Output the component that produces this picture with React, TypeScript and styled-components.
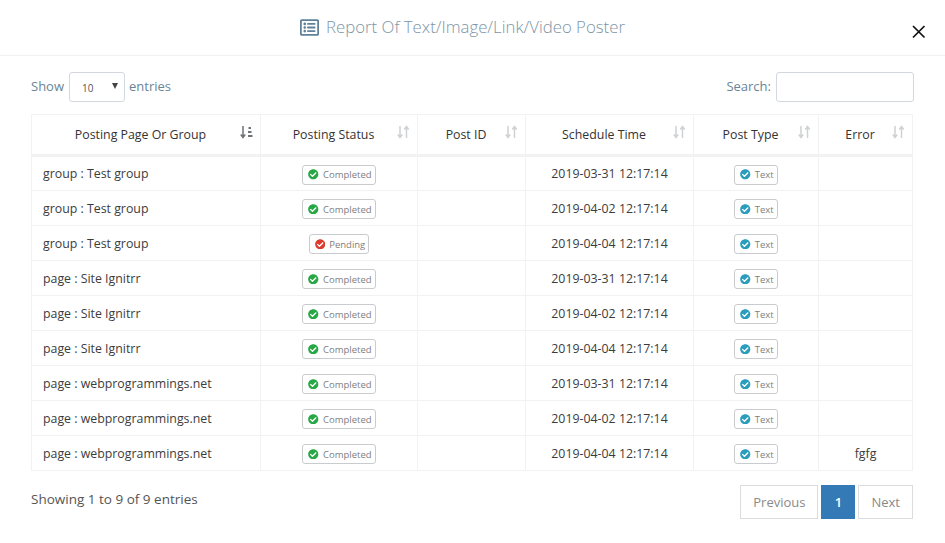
import * as React from "react";
import styled, { createGlobalStyle } from "styled-components";
import { FaCheckCircle, FaRegListAlt } from "react-icons/fa";

const GlobalStyle = createGlobalStyle`
  html, body {
    margin: 0;
    padding: 0;
    background: #fff;
    font-family: "Open Sans", "Liberation Sans", sans-serif;
  }
  * {
    box-sizing: border-box;
  }
`;

const Modal = styled.div`
  width: 945px;
  height: 543px;
  overflow: hidden;
  background: #fff;
`;

const Header = styled.div`
  position: relative;
  height: 56px;
  border-bottom: 1px solid #f1f1f1;
  display: flex;
  align-items: center;
  justify-content: center;
  gap: 7px;
  color: #7d95a5;
  padding-right: 20px;
  padding-bottom: 1px;
`;

const TitleIcon = styled(FaRegListAlt)`
  font-size: 19px;
  color: #5f8299;
`;

const Title = styled.div`
  font-size: 16.8px;
  font-weight: 300;
  line-height: 24px;
`;

const CloseButton = styled.button`
  position: absolute;
  right: 19px;
  top: 25px;
  width: 14px;
  height: 14px;
  padding: 0;
  border: 0;
  background: none;
  display: block;
`;

const Body = styled.div`
  padding: 16px 31px 0 31px;
`;

const Toolbar = styled.div`
  display: flex;
  justify-content: space-between;
  align-items: center;
  height: 30px;
  margin-bottom: 12px;
`;

const ToolGroup = styled.div`
  display: flex;
  align-items: center;
  gap: 4px;
  font-size: 13px;
  color: #698597;
`;

const ToolLabel = styled.span`
  margin-top: -2px;
`;

const SelectBox = styled.div`
  position: relative;
  width: 56px;
  height: 30px;
  margin-left: 1px;
  border: 1px solid #d3d7df;
  border-radius: 3px;
  font-size: 10px;
  color: #555;
  padding: 8px 0 0 12px;
  line-height: 15px;
  background: #fff;
`;

const SelectArrow = styled.span`
  position: absolute;
  right: 6px;
  top: 10px;
  width: 0;
  height: 0;
  border-left: 3.5px solid transparent;
  border-right: 3.5px solid transparent;
  border-top: 6px solid #444;
`;

const SearchInput = styled.input`
  width: 138px;
  height: 30px;
  margin-left: 1px;
  border: 1px solid #d3d7df;
  border-radius: 3px;
  background: #fff;
  outline: none;
`;

const Table = styled.table`
  width: 881px;
  table-layout: fixed;
  border-collapse: collapse;
  font-size: 12.35px;
  color: #333;
`;

const HeadCell = styled.th`
  position: relative;
  height: 41px;
  border: 1px solid #f2f2f2;
  border-bottom: 3px solid #f2f2f2;
  font-weight: 400;
  text-align: center;
  padding: 0 23px 0 12px;
  line-height: 18px;
`;

const SortIcon = styled.svg<{ $active?: boolean }>`
  position: absolute;
  right: 7px;
  top: 10px;
  width: 13px;
  height: 14px;
  color: ${(p) => (p.$active ? "#6f7276" : "#cfd1d3")};
`;

const Cell = styled.td<{ $align?: string }>`
  height: 35px;
  border: 1px solid #f2f2f2;
  padding: 0 11px;
  text-align: ${(p) => p.$align || "center"};
  color: #3c3c3c;
  white-space: nowrap;
`;

const Badge = styled.span`
  display: inline-flex;
  align-items: center;
  gap: 4px;
  height: 20px;
  padding: 0 3px 0 5px;
  border: 1px solid #c9cccf;
  border-radius: 3px;
  font-size: 9.5px;
  color: #808080;
  background: #fff;
  vertical-align: middle;
  margin-top: 2px;
`;

const BadgeIcon = styled(FaCheckCircle)<{ $color: string }>`
  font-size: 10.5px;
  color: ${(p) => p.$color};
`;

const Footer = styled.div`
  display: flex;
  justify-content: space-between;
  align-items: flex-start;
  padding-top: 14px;
`;

const Info = styled.div`
  font-size: 13.5px;
  line-height: 28px;
  color: #555;
`;

const Pager = styled.div`
  display: flex;
  gap: 3px;
  margin-right: 1px;
`;

const PageButton = styled.a<{ $current?: boolean }>`
  height: 34px;
  min-width: 34px;
  padding: 0 12px;
  display: flex;
  align-items: center;
  justify-content: center;
  font-size: 13px;
  border: 1px solid ${(p) => (p.$current ? "#337ab7" : "#dcdcdc")};
  background: ${(p) => (p.$current ? "#337ab7" : "#fff")};
  color: ${(p) => (p.$current ? "#fff" : "#8a8a8a")};
  font-weight: ${(p) => (p.$current ? 600 : 400)};
`;

const columns = [
  { label: "Posting Page Or Group", width: 229, active: true },
  { label: "Posting Status", width: 157 },
  { label: "Post ID", width: 108 },
  { label: "Schedule Time", width: 168 },
  { label: "Post Type", width: 125 },
  { label: "Error", width: 94 },
];

const rows = [
  { name: "group : Test group", status: "Completed", time: "2019-03-31 12:17:14", error: "" },
  { name: "group : Test group", status: "Completed", time: "2019-04-02 12:17:14", error: "" },
  { name: "group : Test group", status: "Pending", time: "2019-04-04 12:17:14", error: "" },
  { name: "page : Site Ignitrr", status: "Completed", time: "2019-03-31 12:17:14", error: "" },
  { name: "page : Site Ignitrr", status: "Completed", time: "2019-04-02 12:17:14", error: "" },
  { name: "page : Site Ignitrr", status: "Completed", time: "2019-04-04 12:17:14", error: "" },
  { name: "page : webprogrammings.net", status: "Completed", time: "2019-03-31 12:17:14", error: "" },
  { name: "page : webprogrammings.net", status: "Completed", time: "2019-04-02 12:17:14", error: "" },
  { name: "page : webprogrammings.net", status: "Completed", time: "2019-04-04 12:17:14", error: "fgfg" },
];

function SortGlyph({ active }: { active?: boolean }) {
  return (
    <SortIcon $active={active} viewBox="0 0 13 14" fill="none" stroke="currentColor" strokeWidth="1.5">
      <path d="M3 1v11.5M.8 9.5L3 12.5l2.2-3" />
      {active ? (
        <path d="M8.5 3h2.5M8 7h3.5M8 11h4.5" strokeWidth="2.2" />
      ) : (
        <path d="M9.5 13V1.5M7.3 4.5L9.5 1.5l2.2 3" />
      )}
    </SortIcon>
  );
}

export default function App() {
  return (
    <Modal>
      <GlobalStyle />
      <Header>
        <TitleIcon />
        <Title>Report Of Text/Image/Link/Video Poster</Title>
        <CloseButton>
          <svg width="14" height="14" viewBox="0 0 14 14" fill="none" stroke="#111" strokeWidth="1.7">
            <path d="M1 1l11.5 11.5M12.5 1L1 12.5" />
          </svg>
        </CloseButton>
      </Header>
      <Body>
        <Toolbar>
          <ToolGroup>
            <ToolLabel>Show</ToolLabel>
            <SelectBox>
              10
              <SelectArrow />
            </SelectBox>
            <ToolLabel>entries</ToolLabel>
          </ToolGroup>
          <ToolGroup>
            <ToolLabel>Search:</ToolLabel>
            <SearchInput />
          </ToolGroup>
        </Toolbar>
        <Table>
          <colgroup>
            {columns.map((col) => (
              <col key={col.label} width={col.width} />
            ))}
          </colgroup>
          <thead>
            <tr>
              {columns.map((col) => (
                <HeadCell key={col.label}>
                  {col.label}
                  <SortGlyph active={col.active} />
                </HeadCell>
              ))}
            </tr>
          </thead>
          <tbody>
            {rows.map((row, index) => (
              <tr key={index}>
                <Cell $align="left">{row.name}</Cell>
                <Cell>
                  <Badge>
                    <BadgeIcon $color={row.status === "Pending" ? "#dc3c2e" : "#28a745"} />
                    {row.status}
                  </Badge>
                </Cell>
                <Cell />
                <Cell>{row.time}</Cell>
                <Cell>
                  <Badge>
                    <BadgeIcon $color="#2b9cbc" />
                    Text
                  </Badge>
                </Cell>
                <Cell>{row.error}</Cell>
              </tr>
            ))}
          </tbody>
        </Table>
        <Footer>
          <Info>Showing 1 to 9 of 9 entries</Info>
          <Pager>
            <PageButton>Previous</PageButton>
            <PageButton $current>1</PageButton>
            <PageButton>Next</PageButton>
          </Pager>
        </Footer>
      </Body>
    </Modal>
  );
}
